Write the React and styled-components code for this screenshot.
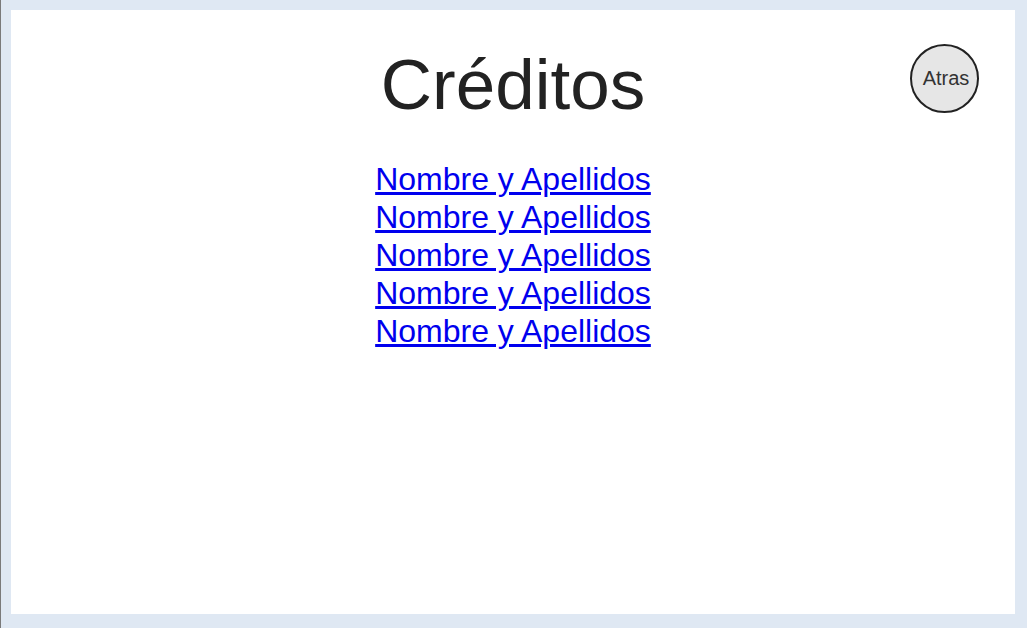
import React from "react";
import styled, { createGlobalStyle } from "styled-components";

const GlobalStyle = createGlobalStyle`
  html, body {
    margin: 0;
    padding: 0;
  }
  body {
    font-family: "Liberation Sans", Arial, sans-serif;
  }
`;

const Page = styled.div`
  box-sizing: border-box;
  height: 628px;
  background-color: #dfe8f3;
  border-left: 1px solid #7a7a7a;
  padding: 10px 12px 14px 10px;
  display: flex;
`;

const Panel = styled.main`
  flex: 1;
  background-color: #ffffff;
  display: flex;
  flex-direction: column;
  align-items: center;
`;

const Header = styled.header`
  align-self: stretch;
  display: grid;
  grid-template-columns: 1fr auto 1fr;
  align-items: start;
  padding: 33px 36px 0 36px;
`;

const Title = styled.h1`
  grid-column: 2;
  margin: 0;
  font-size: 71px;
  font-weight: normal;
  line-height: 83px;
  color: #222222;
  white-space: nowrap;
`;

const BackButton = styled.button`
  grid-column: 3;
  justify-self: end;
  margin-top: 1px;
  width: 69px;
  height: 69px;
  border-radius: 50%;
  border: 2px solid #222222;
  background-color: #e6e6e6;
  color: #333333;
  font-family: "Liberation Sans", Arial, sans-serif;
  font-size: 20px;
  padding: 0 0 0 3px;
  cursor: pointer;
`;

const CreditList = styled.ul`
  list-style: none;
  margin: 34px 0 0 0;
  padding: 0;
  text-align: center;
`;

const CreditItem = styled.li`
  font-size: 32px;
  line-height: 38px;
`;

const CreditLink = styled.a`
  color: #0000ee;
  text-decoration: underline;
`;

const credits = Array.from({ length: 5 }, () => "Nombre y Apellidos");

export default function App() {
  return (
    <>
      <GlobalStyle />
      <Page>
        <Panel>
          <Header>
            <Title>Créditos</Title>
            <BackButton>Atras</BackButton>
          </Header>
          <CreditList>
            {credits.map((name, i) => (
              <CreditItem key={i}>
                <CreditLink href="#">{name}</CreditLink>
              </CreditItem>
            ))}
          </CreditList>
        </Panel>
      </Page>
    </>
  );
}
